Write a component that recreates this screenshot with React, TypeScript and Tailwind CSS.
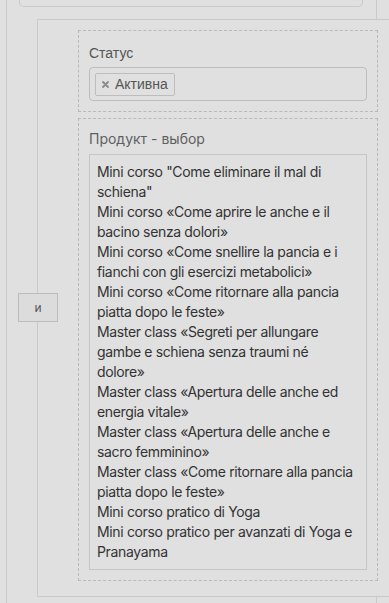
import React from 'react';

const items: string[][] = [
  ['Mini corso "Come eliminare il mal di', 'schiena"'],
  ['Mini corso «Come aprire le anche e il', 'bacino senza dolori»'],
  ['Mini corso «Come snellire la pancia e i', 'fianchi con gli esercizi metabolici»'],
  ['Mini corso «Come ritornare alla pancia', 'piatta dopo le feste»'],
  ['Master class «Segreti per allungare', 'gambe e schiena senza traumi né', 'dolore»'],
  ['Master class «Apertura delle anche ed', 'energia vitale»'],
  ['Master class «Apertura delle anche e', 'sacro femminino»'],
  ['Master class «Come ritornare alla pancia', 'piatta dopo le feste»'],
  ['Mini corso pratico di Yoga'],
  ['Mini corso pratico per avanzati di Yoga e', 'Pranayama'],
];

export default function App() {
  return (
    <div className="relative h-[603px] overflow-hidden bg-[#e0e0e0]">
      {/* outer rule group */}
      <div className="ml-[6px] h-[603px] w-[371px] border-x border-[#c9c9c9]">
        <div className="ml-[12px] h-[7px] w-[344px] rounded-b-[5px] border-x border-b border-[#c9c9c9]" />

        {/* nested group */}
        <div className="relative z-10 ml-[30px] mt-[12px] h-[578px] w-[400px] border-y border-l border-[#c9c9c9] bg-[#e0e0e0] pl-[40px] pt-[10px]">
          <div className="flex w-[300px] flex-col gap-[6px]">
            {/* Статус */}
            <div className="border border-dashed border-[#b9b9b9] px-[10px] pb-[10px] pt-[12px]">
              <div className="mb-[4px] text-[14px] leading-[20px] text-[#555] [font-family:'Liberation_Sans',Arial,sans-serif]">
                Статус
              </div>
              <div className="flex h-[34px] items-start rounded-[4px] border border-[#bdbdbd] p-[5px]">
                <span className="flex h-[23px] items-center gap-[6px] rounded-[2px] border border-[#bdbdbd] pl-[6px] pr-[6px] text-[14px] text-[#555] [font-family:'Liberation_Sans',Arial,sans-serif]">
                  <svg width="7" height="7" viewBox="0 0 7 7" className="text-[#8a8a8a]">
                    <path d="M1 1L6 6M6 1L1 6" stroke="currentColor" strokeWidth="1.8" strokeLinecap="round" />
                  </svg>
                  Активна
                </span>
              </div>
            </div>

            {/* Продукт - выбор */}
            <div className="border border-dashed border-[#b9b9b9] px-[10px] pb-[10px] pt-[10px]">
              <div className="mb-[5px] text-[14px] leading-[20px] text-[#5f5f5f] [font-family:Inter,sans-serif]">
                Продукт - выбор
              </div>
              <div className="border border-[#c6c6c6] px-[7px] py-[7px] text-[14px] leading-[20px] tracking-[-0.35px] text-[#333] [font-family:Inter,sans-serif]">
                {items.map((lines, i) => (
                  <div key={i}>
                    {lines.map((l, j) => (
                      <div key={j} className="whitespace-nowrap">
                        {l}
                      </div>
                    ))}
                  </div>
                ))}
              </div>
            </div>
          </div>
        </div>
      </div>

      {/* logic connector */}
      <div className="absolute left-[18px] top-[293px] z-20 flex h-[29px] w-[40px] items-center justify-center border border-[#bcbcbc] bg-[#dcdcdc] text-[12px] text-[#555] [font-family:Inter,sans-serif]">
        и
      </div>
    </div>
  );
}
